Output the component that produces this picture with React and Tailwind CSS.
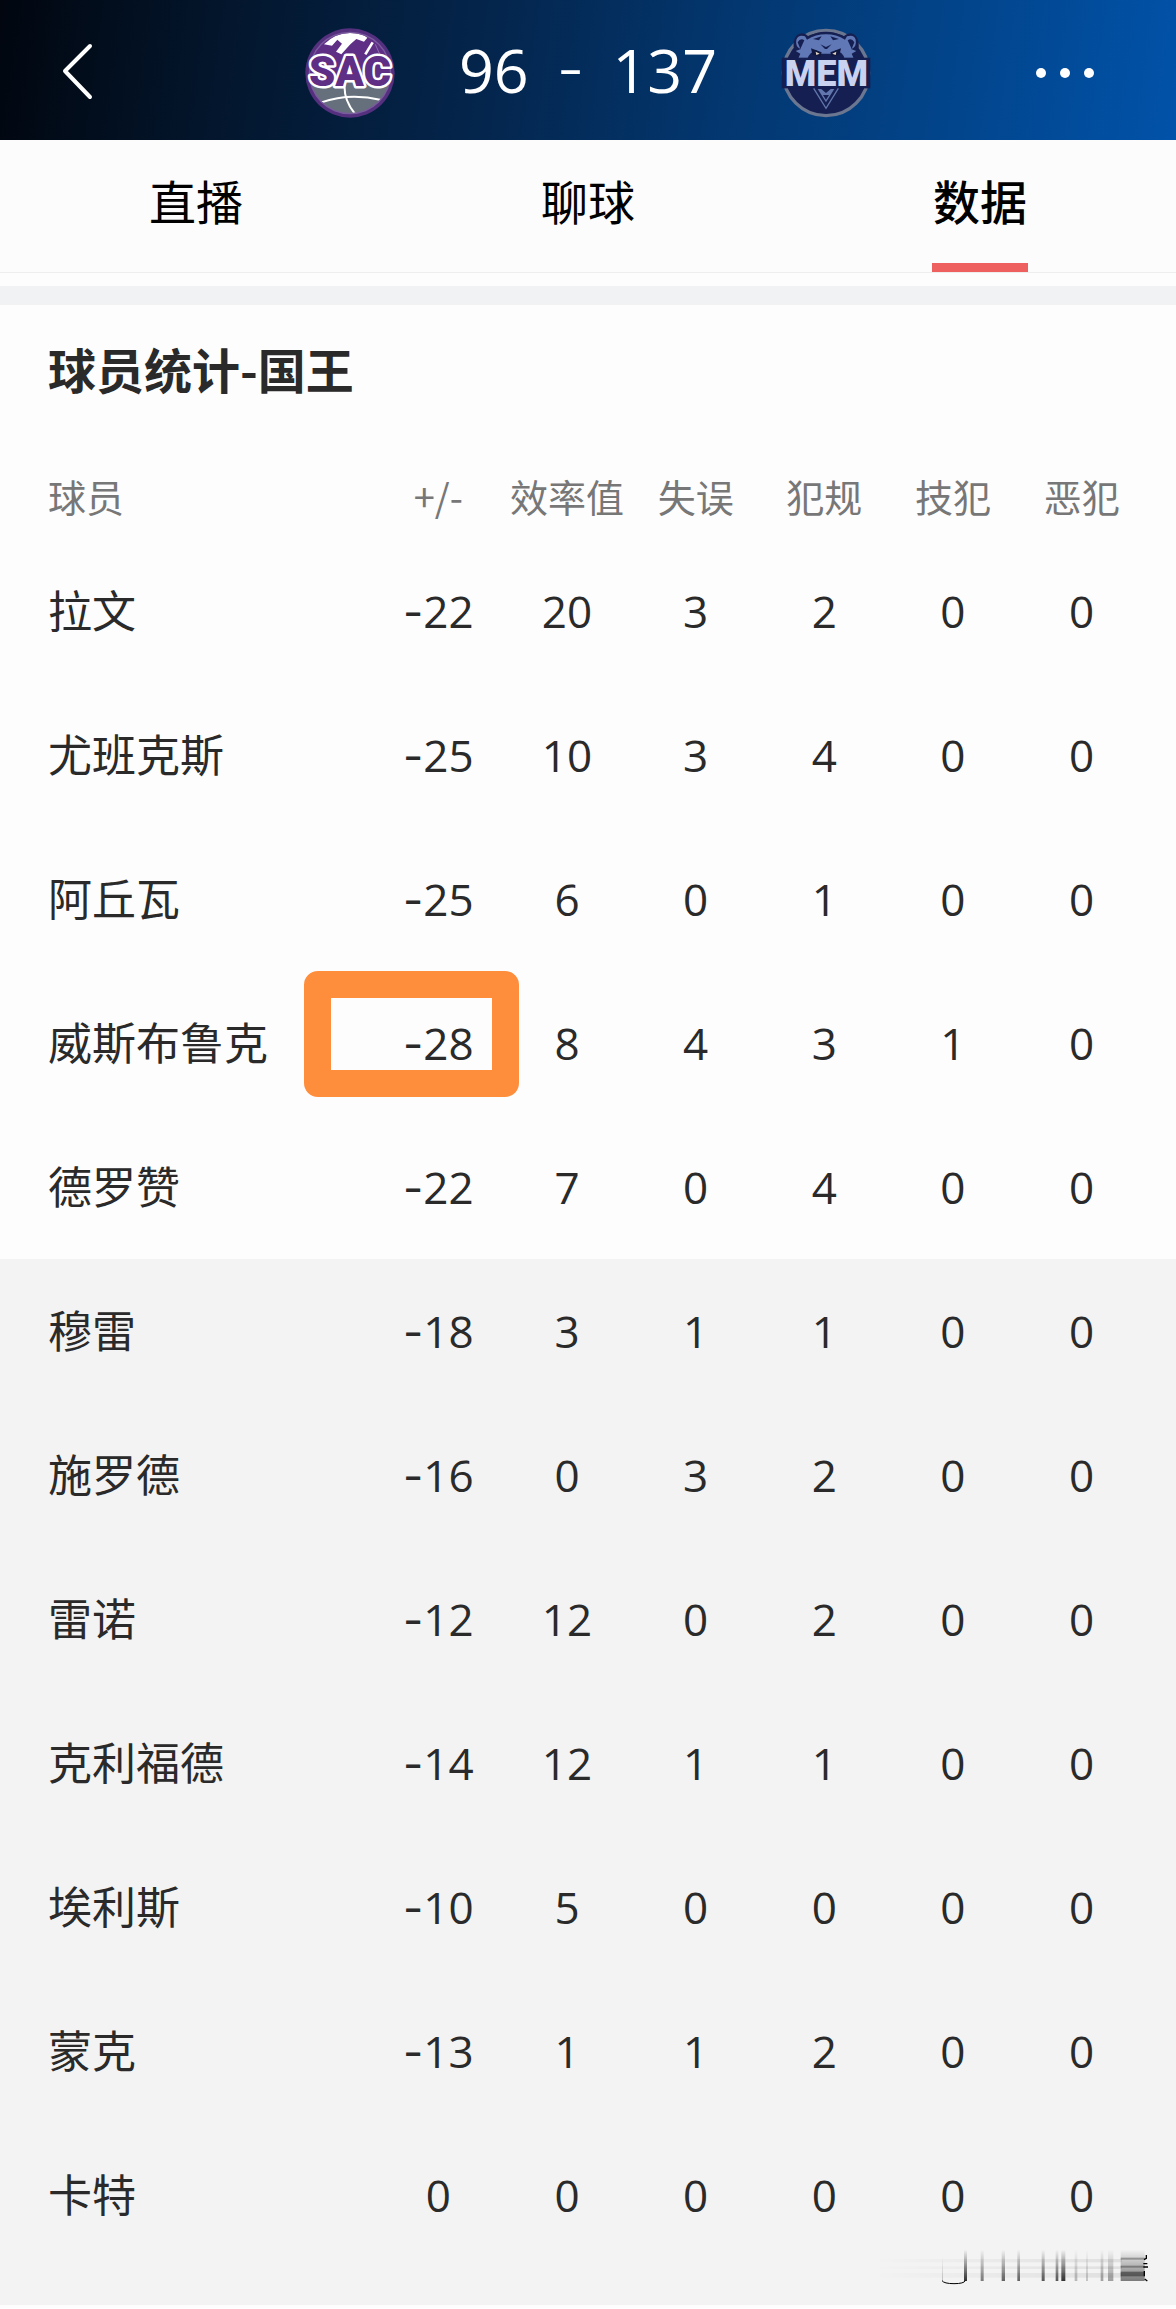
import React, { useState } from "react";

const tabs = ["直播", "聊球", "数据"];

const columns = ["+/-", "效率值", "失误", "犯规", "技犯", "恶犯"];

const starters = [
  { name: "拉文", stats: [-22, 20, 3, 2, 0, 0] },
  { name: "尤班克斯", stats: [-25, 10, 3, 4, 0, 0] },
  { name: "阿丘瓦", stats: [-25, 6, 0, 1, 0, 0] },
  { name: "威斯布鲁克", stats: [-28, 8, 4, 3, 1, 0], marked: true },
  { name: "德罗赞", stats: [-22, 7, 0, 4, 0, 0] },
];

const bench = [
  { name: "穆雷", stats: [-18, 3, 1, 1, 0, 0] },
  { name: "施罗德", stats: [-16, 0, 3, 2, 0, 0] },
  { name: "雷诺", stats: [-12, 12, 0, 2, 0, 0] },
  { name: "克利福德", stats: [-14, 12, 1, 1, 0, 0] },
  { name: "埃利斯", stats: [-10, 5, 0, 0, 0, 0] },
  { name: "蒙克", stats: [-13, 1, 1, 2, 0, 0] },
  { name: "卡特", stats: [0, 0, 0, 0, 0, 0] },
];

function SacLogo() {
  return (
    <svg viewBox="27 27 270 270" className="size-[90px] overflow-visible" role="img" aria-label="SAC">
      <defs>
        <clipPath id="sac-ball">
          <circle cx="162" cy="162" r="120" />
        </clipPath>
      </defs>
      <circle cx="162" cy="162" r="134" fill="#54307f" />
      <circle cx="162" cy="162" r="124" fill="#7a5b9e" />
      <g clipPath="url(#sac-ball)">
        <rect x="30" y="30" width="270" height="150" fill="#5f2f86" />
        <rect x="30" y="180" width="270" height="120" fill="#66707c" />
        <path d="M84 76 Q118 42 162 42 Q196 42 214 56 L204 68 L181 60 L163 76 L136 106 L120 98 L138 74 L124 62 L108 80 Z" fill="#fff" />
        <path d="M230 70 L208 106" stroke="#fff" strokeWidth="8" />
        <path d="M238 76 L262 130" stroke="#8b6fab" strokeWidth="3" />
        <path d="M76 250 Q160 220 256 243" stroke="#fff" strokeWidth="6" fill="none" />
        <path d="M146 196 Q142 246 182 290" stroke="#fff" strokeWidth="6" fill="none" />
      </g>
      <text
        x="162"
        y="202"
        textAnchor="middle"
        fontSize="126"
        className="font-[Roboto,sans-serif] font-black"
        fill="#5f2f86"
        stroke="#fff"
        strokeWidth="15"
        strokeLinejoin="round"
        paintOrder="stroke"
      >
        SAC
      </text>
    </svg>
  );
}

function MemLogo() {
  return (
    <svg viewBox="32 27 270 270" className="size-[90px] overflow-visible" role="img" aria-label="MEM">
      <circle cx="167" cy="162" r="128" fill="#161f51" stroke="#6b7690" strokeWidth="10" />
      {/* bear head */}
      <path
        d="M84 122 L74 98 Q62 66 80 48 Q98 36 114 52 Q138 38 167 38 Q196 38 220 52 Q238 36 254 48 Q272 66 262 98 L250 122 Z"
        fill="#161f51"
      />
      <path
        d="M84 118 L90 104 L76 96 L92 90 Q74 84 78 62 Q84 46 104 52 L110 62 Q136 46 167 46 Q198 46 224 62 L230 52 Q252 46 256 62 Q260 84 242 90 L258 96 L244 104 L250 118 L222 118 Q218 100 196 94 L182 104 L152 104 L138 94 Q118 100 112 118 Z"
        fill="#6079b6"
      />
      <path d="M82 70 Q90 56 102 64 L90 90 Z M252 70 Q244 56 232 64 L244 90 Z" fill="#161f51" />
      <path d="M128 60 L154 52 L146 64 Z M206 60 L180 52 L188 64 Z M150 76 L167 84 L184 76 L170 90 L164 90 Z" fill="#161f51" />
      <path d="M122 88 L154 100 L150 114 L126 106 Z M212 88 L180 100 L184 114 L208 106 Z" fill="#10183f" />
      <path d="M136 98 L148 104 L138 108 Z M198 98 L186 104 L196 108 Z" fill="#e8d9c4" />
      <rect x="34" y="116" width="266" height="92" fill="#161f51" />
      <path d="M130 208 L167 268 L204 208" fill="none" stroke="#6076ad" strokeWidth="4" />
      <path d="M142 210 L192 210 L167 250 Z" fill="#6076ad" />
      <path d="M150 208 L167 222 L184 208 Z M158 228 L167 242 L176 228 Z" fill="#161f51" />
      <text
        x="168"
        y="201"
        textAnchor="middle"
        fontSize="108"
        className="font-[Roboto,sans-serif] font-black"
        fill="#c9d2ee"
      >
        MEM
      </text>
    </svg>
  );
}

// faded stamp in the bottom corner: vertical bars that get denser to the right
const bars = [
  [276, 9, 0.8],
  [326, 9, 0.5],
  [389, 10, 0.6],
  [436, 8, 0.6],
  [509, 9, 0.65],
  [551, 8, 0.65],
  [568, 12, 0.8],
  [608, 8, 0.25],
  [642, 6, 0.2],
  [686, 8, 0.35],
  [708, 16, 0.35],
];

function Stamp() {
  return (
    <svg viewBox="0 0 840 120" className="absolute right-6 bottom-[18px] h-[40px] w-[280px]" aria-hidden="true">
      <defs>
        <linearGradient id="fade" x1="0" y1="0" x2="0" y2="1">
          <stop offset="0" stopColor="#000" stopOpacity="0" />
          <stop offset="1" stopColor="#000" />
        </linearGradient>
        <linearGradient id="haze" x1="0" y1="0" x2="1" y2="0">
          <stop offset="0" stopColor="#000" stopOpacity="0" />
          <stop offset="1" stopColor="#000" stopOpacity="0.08" />
        </linearGradient>
      </defs>
      <rect x="0" y="36" width="750" height="10" fill="url(#haze)" />
      <rect x="0" y="58" width="750" height="8" fill="url(#haze)" />
      <rect x="0" y="78" width="750" height="14" fill="url(#haze)" />
      {bars.map(([x, w, o]) => (
        <rect key={x} x={x} y="8" width={w} height="94" fill="url(#fade)" opacity={o} />
      ))}
      <path d="M210 101 Q216 110 246 110 Q276 110 280 101" stroke="#000" strokeWidth="3" fill="none" />
      <rect x="210" y="30" width="3" height="72" fill="url(#fade)" opacity="0.2" />
      <rect x="746" y="8" width="72" height="94" fill="url(#fade)" opacity="0.5" />
      <rect x="746" y="32" width="72" height="6" fill="#000" opacity="0.3" />
      <rect x="746" y="56" width="72" height="6" fill="#000" opacity="0.3" />
      <rect x="746" y="74" width="72" height="14" fill="#000" opacity="0.4" />
      <path d="M823 24 V34 L816 38 M814 50 H826 M814 60 H828 M817 72 V88 M818 96 L826 102" stroke="#000" strokeWidth="4" fill="none" />
    </svg>
  );
}

function Stat({ value }) {
  if (value >= 0) return value;
  return (
    <>
      <span className="font-[Inter,sans-serif]">-</span>
      {Math.abs(value)}
    </>
  );
}

function PlayerRow({ player }) {
  return (
    <tr className="h-36">
      <th scope="row" className="p-0 pb-1 pl-12 text-left font-normal whitespace-nowrap">
        {player.name}
      </th>
      {player.stats.map((value, idx) => (
        <td key={idx} className="relative p-0 text-center font-['Open_Sans',sans-serif]">
          <Stat value={value} />
          {player.marked && idx === 0 && (
            <span className="absolute top-0 -left-[70px] h-[126px] w-[215px] rounded-[14px] border-[27px] border-[#ff8e3c]" />
          )}
        </td>
      ))}
      <td className="p-0" />
    </tr>
  );
}

export default function App() {
  const [active, setActive] = useState(2);

  return (
    <div className="bg-[#fdfdfd] pb-[3px] font-['Noto_Sans_CJK_SC',sans-serif] text-[#2a2a2a]">
      <header className="grid h-[140px] grid-cols-[1fr_auto_1fr] items-center bg-[linear-gradient(98deg,#01060f_0%,#03152b_18%,#04244a_40%,#033770_62%,#02448a_80%,#0152a9_100%)] pt-1.5 text-white">
        <button type="button" aria-label="返回" className="ml-[60px] justify-self-start">
          <svg viewBox="0 0 36 60" className="h-[60px] w-[36px]" fill="none" stroke="#fff" strokeWidth="4" strokeLinecap="round" strokeLinejoin="round">
            <path d="M30 3 L5 28 L30 54" />
          </svg>
        </button>
        <div className="flex items-center gap-16">
          <SacLogo />
          <div className="flex items-center gap-7 pb-2 font-['Open_Sans',sans-serif] text-[61px] leading-none">
            <span>96</span>
            <span className="font-[Inter,sans-serif] font-light">-</span>
            <span>137</span>
          </div>
          <MemLogo />
        </div>
        <button type="button" aria-label="更多" className="mr-[82px] flex gap-[14px] justify-self-end">
          <span className="size-[10px] rounded-full bg-white" />
          <span className="size-[10px] rounded-full bg-white" />
          <span className="size-[10px] rounded-full bg-white" />
        </button>
      </header>

      <nav className="grid grid-cols-3 border-b border-[#eeeeee] bg-[#fcfcfd] text-[47px] text-black">
        {tabs.map((tab, idx) => (
          <button
            key={tab}
            type="button"
            onClick={() => setActive(idx)}
            className={idx === active ? "flex flex-col items-center font-medium" : "flex flex-col items-center"}
          >
            <span className="pt-[18px] leading-[84px]">{tab}</span>
            <span
              className={idx === active ? "mt-[21px] h-[9px] w-24 bg-[#ee6060]" : "mt-[21px] h-[9px] w-24"}
            />
          </button>
        ))}
      </nav>

      <main>
        <div className="mt-[13px] h-[19px] bg-[#f0f2f4]" />
        <h1 className="px-12 pt-7 text-[48px] leading-[70px] font-bold">球员统计-国王</h1>
        <div className="relative">
          <table className="mt-[50px] w-full table-fixed border-collapse text-[44px] leading-[64px]">
            <thead>
              <tr className="h-[86px] align-top text-[38px] leading-[86px] text-[#777777]">
                <th scope="col" className="w-[374px] p-0 pl-12 text-left font-normal">
                  球员
                </th>
                {columns.map((col) => (
                  <th key={col} scope="col" className="p-0 text-center font-normal whitespace-nowrap">
                    {col}
                  </th>
                ))}
                <td className="w-[30px] p-0" />
              </tr>
            </thead>
            <tbody>
              {starters.map((player) => (
                <PlayerRow key={player.name} player={player} />
              ))}
            </tbody>
            <tbody className="bg-[#f3f3f3]">
              {bench.map((player) => (
                <PlayerRow key={player.name} player={player} />
              ))}
            </tbody>
          </table>
          <div className="h-[38px] bg-[#f3f3f3]" />
          <Stamp />
        </div>
      </main>
    </div>
  );
}
